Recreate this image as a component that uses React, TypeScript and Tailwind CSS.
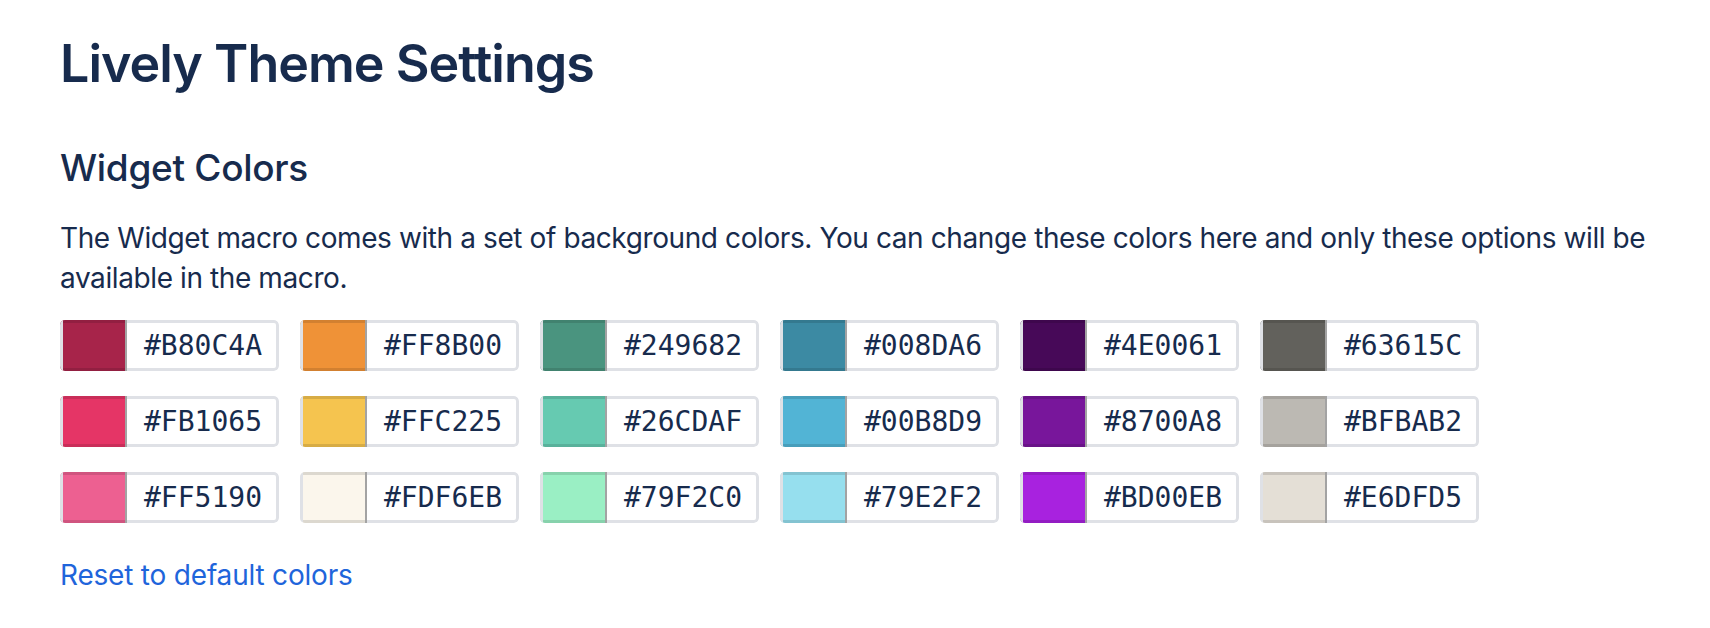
const colors = [
  { hex: "#B80C4A", shown: "#A7244A" },
  { hex: "#FF8B00", shown: "#EF9237" },
  { hex: "#249682", shown: "#4A947F" },
  { hex: "#008DA6", shown: "#3C8AA3" },
  { hex: "#4E0061", shown: "#470958" },
  { hex: "#63615C", shown: "#62615C" },
  { hex: "#FB1065", shown: "#E53566" },
  { hex: "#FFC225", shown: "#F5C44F" },
  { hex: "#26CDAF", shown: "#66CAB1" },
  { hex: "#00B8D9", shown: "#52B4D5" },
  { hex: "#8700A8", shown: "#78169B" },
  { hex: "#BFBAB2", shown: "#BCB9B3" },
  { hex: "#FF5190", shown: "#ED6091" },
  { hex: "#FDF6EB", shown: "#FBF6EC" },
  { hex: "#79F2C0", shown: "#9AEFC4" },
  { hex: "#79E2F2", shown: "#96DFEE" },
  { hex: "#BD00EB", shown: "#A822DF" },
  { hex: "#E6DFD5", shown: "#E4DFD6" },
];

function ColorField({ hex, shown }: { hex: string; shown: string }) {
  return (
    <div className="flex h-[51px] w-[219px] overflow-hidden rounded-[5px]">
      {/* swatch */}
      <div
        className="w-[67px] flex-shrink-0 border-l-[3px] border-r-2 border-l-[#DFE1E6] border-r-[#A3A3A3] shadow-[inset_0_3px_0_rgba(0,0,0,0.12),inset_0_-3px_0_rgba(0,0,0,0.12)]"
        style={{ backgroundColor: shown }}
      />
      {/* hex value */}
      <div className="flex flex-1 items-center rounded-r-[5px] border-[3px] border-l-0 border-[#DFE1E6] bg-white pl-[17px] font-['DejaVu_Sans_Mono',monospace] text-[28px] text-[#172B4D]">
        {hex}
      </div>
    </div>
  );
}

export default function App() {
  return (
    <div className="min-h-screen bg-white px-[60px] pt-[32px] font-['Inter',sans-serif] text-[#172B4D]">
      <h1 className="text-[52px] font-semibold leading-[64px] tracking-[-1px]">Lively Theme Settings</h1>

      <h2 className="mt-[50px] text-[37px] font-medium leading-[44px] tracking-[-0.3px]">Widget Colors</h2>

      <p className="mt-[28px] max-w-[1620px] text-[28px] leading-[40px] tracking-[-0.4px]">
        The Widget macro comes with a set of background colors. You can change these colors here and only these
        options will be available in the macro.
      </p>

      <div className="mt-[22px] grid w-fit grid-cols-6 gap-x-[21px] gap-y-[25px]">
        {colors.map((c) => (
          <ColorField key={c.hex} hex={c.hex} shown={c.shown} />
        ))}
      </div>

      <a href="#" className="mt-[32px] block w-fit text-[28px] leading-[40px] tracking-[-0.2px] text-[#1F65DB]">
        Reset to default colors
      </a>
    </div>
  );
}
